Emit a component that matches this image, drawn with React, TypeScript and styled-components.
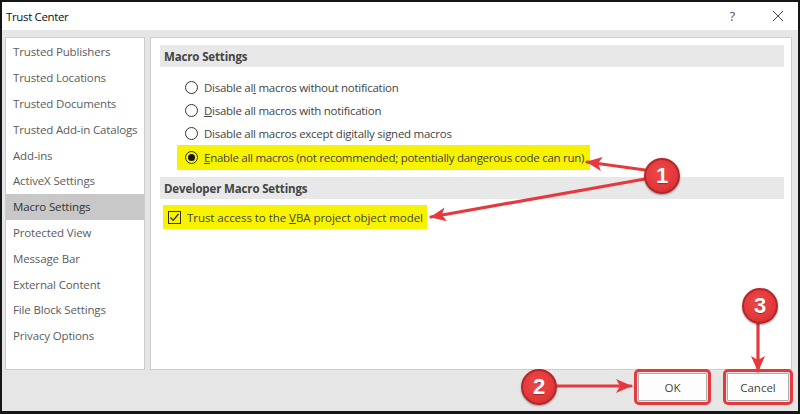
import React from 'react';
import styled, { createGlobalStyle } from 'styled-components';

const GlobalStyle = createGlobalStyle`
  html, body {
    margin: 0;
    padding: 0;
    background: #ffffff;
  }
  body {
    font-family: 'Open Sans', 'Noto Sans', sans-serif;
  }
`;

const navItems = [
  'Trusted Publishers',
  'Trusted Locations',
  'Trusted Documents',
  'Trusted Add-in Catalogs',
  'Add-ins',
  'ActiveX Settings',
  'Macro Settings',
  'Protected View',
  'Message Bar',
  'External Content',
  'File Block Settings',
  'Privacy Options',
];

const macroOptions = [
  { label: 'Disable all macros without notification', at: 10, checked: false },
  { label: 'Disable all macros with notification', at: 0, checked: false },
  { label: 'Disable all macros except digitally signed macros', at: -1, checked: false },
  {
    label: 'Enable all macros (not recommended; potentially dangerous code can run)',
    at: 0,
    checked: true,
  },
];

function Mnemonic({ text, at }: { text: string; at: number }) {
  if (at < 0) return <>{text}</>;
  return (
    <>
      {text.slice(0, at)}
      <u>{text.charAt(at)}</u>
      {text.slice(at + 1)}
    </>
  );
}

function App() {
  return (
    <>
      <GlobalStyle />
      <Frame>
        <TitleBar>
          <Title>Trust Center</Title>
          <TitleButtons>
            <HelpMark>?</HelpMark>
            <CloseIcon viewBox="0 0 12 12">
              <path d="M1 1 L11 11 M11 1 L1 11" stroke="#444" strokeWidth="1" fill="none" />
            </CloseIcon>
          </TitleButtons>
        </TitleBar>

        <Body>
          <Nav>
            {navItems.map((item) => (
              <NavItem key={item} $selected={item === 'Macro Settings'}>
                {item}
              </NavItem>
            ))}
          </Nav>

          <Content>
            <SectionHeader>Macro Settings</SectionHeader>
            <OptionList>
              {macroOptions.map((opt) => (
                <OptionRow key={opt.label} $marked={opt.checked}>
                  <Radio $checked={opt.checked} />
                  <span>
                    <Mnemonic text={opt.label} at={opt.at} />
                  </span>
                </OptionRow>
              ))}
            </OptionList>

            <SectionHeader>Developer Macro Settings</SectionHeader>
            <CheckRow>
              <CheckBox>
                <svg width="11" height="11" viewBox="0 0 11 11">
                  <path d="M1.5 5.5 L4.2 8.3 L9.5 2" stroke="#222" strokeWidth="1.2" fill="none" />
                </svg>
              </CheckBox>
              <span>
                Trust access to the <u>V</u>BA project object model
              </span>
            </CheckRow>
          </Content>
        </Body>

        <Footer>
          <DialogButton $width={69}>OK</DialogButton>
          <DialogButton $width={62}>Cancel</DialogButton>
        </Footer>

        <Annotations viewBox="0 0 800 414" width="800" height="414">
          <defs>
            <marker
              id="head"
              viewBox="0 0 16 14"
              refX="15"
              refY="7"
              markerWidth="16"
              markerHeight="14"
              markerUnits="userSpaceOnUse"
              orient="auto"
            >
              <path d="M0 0 L16 7 L0 14 L4 7 Z" fill="#e5393d" />
            </marker>
          </defs>
          <ArrowLine x1="645" y1="170" x2="587" y2="162" markerEnd="url(#head)" />
          <ArrowLine x1="645" y1="179" x2="431" y2="217" markerEnd="url(#head)" />
          <ArrowLine x1="553" y1="386" x2="631" y2="386" markerEnd="url(#head)" />
          <ArrowLine x1="758" y1="320" x2="758" y2="371" markerEnd="url(#head)" />
        </Annotations>

        <Badge style={{ left: 660, top: 174 }}>1</Badge>
        <Badge style={{ left: 537, top: 385 }}>2</Badge>
        <Badge style={{ left: 758, top: 304 }}>3</Badge>
      </Frame>
    </>
  );
}

const Frame = styled.div`
  position: relative;
  box-sizing: border-box;
  width: 800px;
  height: 414px;
  border: 2px solid #161616;
  border-bottom-width: 3px;
  background: #e6e6e6;
  display: flex;
  flex-direction: column;
  overflow: hidden;
`;

const TitleBar = styled.div`
  height: 28px;
  flex-shrink: 0;
  background: #ffffff;
  display: flex;
  align-items: center;
  justify-content: space-between;
  padding: 0 14px 0 4px;
`;

const Title = styled.div`
  font-size: 11.5px;
  letter-spacing: -0.35px;
  color: #111;
`;

const TitleButtons = styled.div`
  display: flex;
  align-items: center;
  gap: 37px;
`;

const HelpMark = styled.span`
  font-size: 13px;
  color: #555;
`;

const CloseIcon = styled.svg`
  width: 12px;
  height: 12px;
`;

const Body = styled.div`
  flex: 1;
  display: flex;
  gap: 5px;
  padding: 7px 6px 0 3px;
  min-height: 0;
`;

const Nav = styled.div`
  width: 140px;
  box-sizing: border-box;
  flex-shrink: 0;
  background: #ffffff;
  border: 1px solid #cdcdcd;
  padding-top: 1px;
`;

const NavItem = styled.div<{ $selected?: boolean }>`
  height: 25.8px;
  display: flex;
  align-items: center;
  padding-left: 7px;
  font-size: 11.5px;
  letter-spacing: -0.15px;
  color: ${(p) => (p.$selected ? '#333' : '#5c5c5c')};
  background: ${(p) => (p.$selected ? '#c8c8c8' : 'transparent')};
  white-space: nowrap;
`;

const Content = styled.div`
  flex: 1;
  background: #ffffff;
  border: 1px solid #cdcdcd;
  padding: 7px 7px 0 9px;
`;

const SectionHeader = styled.div`
  height: 22px;
  display: flex;
  align-items: center;
  padding-left: 4px;
  background: #e8e8e8;
  font-size: 11.5px;
  letter-spacing: -0.15px;
  font-weight: 700;
  color: #444;
`;

const OptionList = styled.div`
  display: flex;
  flex-direction: column;
  align-items: flex-start;
  padding: 9px 0 7px 17px;
`;

const OptionRow = styled.div<{ $marked?: boolean }>`
  display: flex;
  align-items: center;
  gap: 6px;
  height: ${(p) => (p.$marked ? '25px' : '23px')};
  padding: 0 6px 0 8px;
  font-size: 11.5px;
  letter-spacing: -0.27px;
  color: #444;
  white-space: nowrap;
  background: ${(p) => (p.$marked ? '#f7f300' : 'transparent')};
`;

const Radio = styled.span<{ $checked?: boolean }>`
  box-sizing: border-box;
  width: 13px;
  height: 13px;
  border-radius: 50%;
  border: 1px solid #333;
  display: inline-flex;
  align-items: center;
  justify-content: center;
  flex-shrink: 0;
  &::after {
    content: '';
    width: 7px;
    height: 7px;
    border-radius: 50%;
    background: ${(p) => (p.$checked ? '#1a1a1a' : 'transparent')};
  }
`;

const CheckRow = styled.div`
  display: inline-flex;
  align-items: center;
  gap: 6px;
  height: 24px;
  margin: 6px 0 0 3px;
  padding: 0 4px 0 5px;
  background: #f7f300;
  font-size: 11.5px;
  letter-spacing: -0.05px;
  color: #444;
  white-space: nowrap;
`;

const CheckBox = styled.span`
  box-sizing: border-box;
  width: 13px;
  height: 13px;
  border: 1px solid #333;
  display: inline-flex;
  align-items: center;
  justify-content: center;
  flex-shrink: 0;
`;

const Footer = styled.div`
  height: 38px;
  flex-shrink: 0;
  display: flex;
  justify-content: flex-end;
  align-items: flex-start;
  gap: 20px;
  padding: 3px 9px 0 0;
`;

const DialogButton = styled.button<{ $width: number }>`
  width: ${(p) => p.$width}px;
  height: 28px;
  box-sizing: border-box;
  background: #fdfdfd;
  border: 1px solid #adadad;
  font-family: 'Open Sans', 'Noto Sans', sans-serif;
  font-size: 11.5px;
  color: #444;
  outline: 3px solid #e5393d;
  outline-offset: 1px;
  border-radius: 1px;
`;

const Annotations = styled.svg`
  position: absolute;
  left: -2px;
  top: -2px;
  pointer-events: none;
`;

const ArrowLine = styled.line`
  stroke: #e5393d;
  stroke-width: 3.2;
  stroke-linecap: round;
`;

const Badge = styled.div`
  position: absolute;
  width: 32px;
  height: 32px;
  margin: -18px 0 0 -18px;
  border-radius: 50%;
  background: radial-gradient(circle at 45% 40%, #ef4a48 0%, #e2383a 60%, #c42a2d 100%);
  border: 2px solid #b5262a;
  box-shadow: 0 1px 2px rgba(0, 0, 0, 0.35);
  color: #ffffff;
  font-family: 'Liberation Sans', Arial, sans-serif;
  font-weight: 700;
  font-size: 22px;
  display: flex;
  align-items: center;
  justify-content: center;
  text-shadow: 0 1px 1px rgba(0, 0, 0, 0.3);
`;

export default App;
